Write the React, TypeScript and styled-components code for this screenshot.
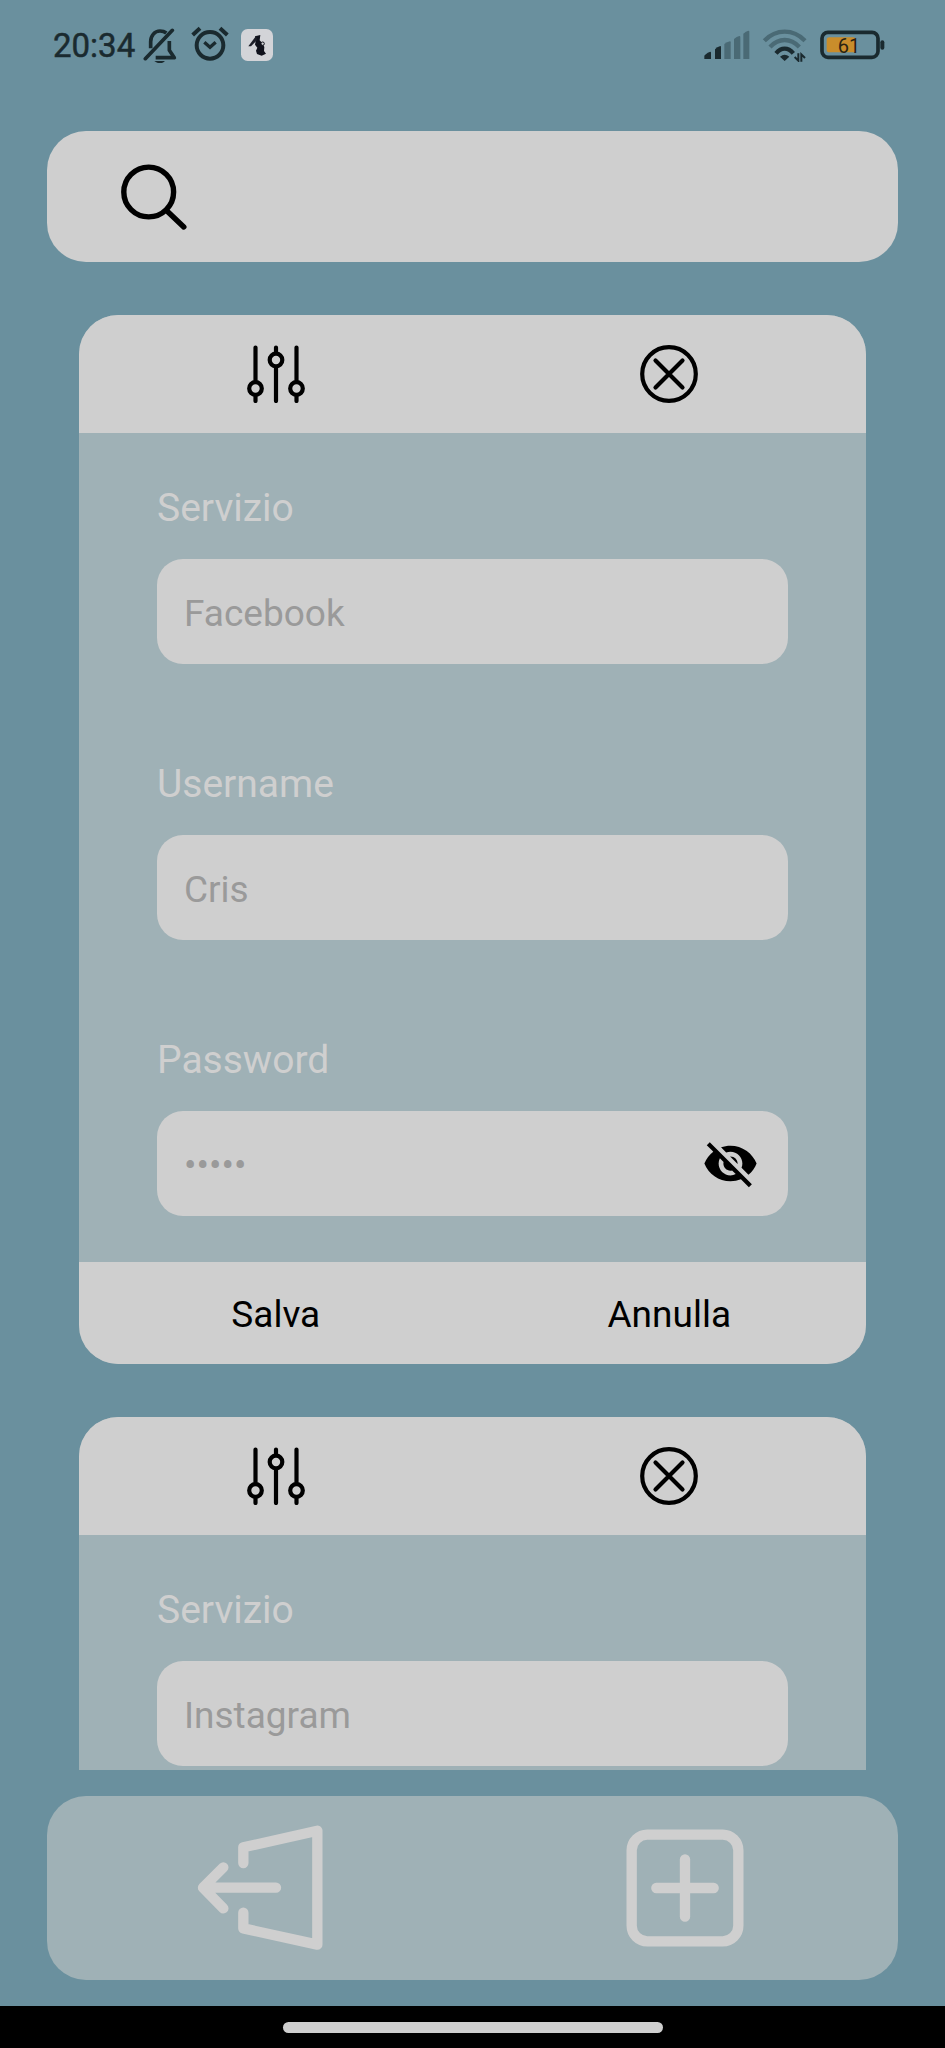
import React, { useId, useState } from "react";
import styled, { createGlobalStyle } from "styled-components";
import { MdVisibility, MdVisibilityOff } from "react-icons/md";

const color = {
  page: "#6a909e",
  light: "#cfcfcf",
  panel: "#9fb1b6",
  placeholder: "#9a9a9a",
  status: "#1a2a2f",
  statusFaded: "#4a6a75",
};

const GlobalStyle = createGlobalStyle`
  *, *::before, *::after { box-sizing: border-box; }
  body { margin: 0; background: ${color.page}; font-family: Roboto, "Liberation Sans", sans-serif; }
  button, input { font: inherit; }
`;

const Screen = styled.div`
  height: 100vh;
  display: flex;
  flex-direction: column;
  background: ${color.page};
`;

const StatusBar = styled.header`
  flex: none;
  height: 90px;
  padding: 0 60px 0 53px;
  display: flex;
  align-items: center;
  justify-content: space-between;
  color: ${color.status};
`;

const StatusGroup = styled.div<{ $gap: number }>`
  display: flex;
  align-items: center;
  gap: ${(p) => p.$gap}px;
`;

const Clock = styled.time`
  padding-top: 2px;
  font-size: 33px;
  line-height: 40px;
  -webkit-text-stroke: 0.5px currentColor;
`;

const SearchBox = styled.label`
  flex: none;
  height: 131px;
  margin: 41px 5% 0;
  padding: 0 39px 0 74px;
  display: flex;
  align-items: center;
  gap: 26px;
  border-radius: 39px;
  background: ${color.light};
`;

const SearchInput = styled.input`
  flex: 1;
  min-width: 0;
  height: 100%;
  border: 0;
  outline: 0;
  background: transparent;
  font-size: 37px;
`;

const CardList = styled.main`
  flex: 1;
  min-height: 0;
  margin-top: 53px;
  padding: 0 79px;
  overflow-y: auto;
  scrollbar-width: none;
  display: flex;
  flex-direction: column;
  gap: 53px;
`;

const Card = styled.form`
  flex: none;
  border-radius: 39px;
  overflow: hidden;
  background: ${color.panel};
`;

const CardBar = styled.div`
  height: 118px;
  display: grid;
  grid-template-columns: 1fr 1fr;
  background: ${color.light};
`;

const CardActions = styled(CardBar)`
  height: 102px;
  padding-top: 3px;
`;

const BarButton = styled.button`
  display: flex;
  align-items: center;
  justify-content: center;
  padding: 0;
  border: 0;
  background: transparent;
  color: #000;
  font-size: 37px;
  line-height: 44px;
  cursor: pointer;
`;

const Fields = styled.div`
  padding: 52px 78px 46px;
  display: flex;
  flex-direction: column;
  gap: 97px;
`;

const FieldGroup = styled.div`
  display: flex;
  flex-direction: column;
  gap: 27px;
`;

const Label = styled.label`
  font-size: 39px;
  line-height: 47px;
  color: ${color.light};
`;

const InputBox = styled.div`
  height: 105px;
  padding: 0 29px 0 27px;
  display: flex;
  align-items: center;
  border-radius: 26px;
  background: ${color.light};
`;

const TextInput = styled.input`
  flex: 1;
  min-width: 0;
  height: 100%;
  padding: 3px 0 0;
  border: 0;
  outline: 0;
  background: transparent;
  font-size: 37px;
  color: #000;
  &::placeholder { color: ${color.placeholder}; opacity: 1; }
`;

const EyeButton = styled.button`
  display: flex;
  padding: 0;
  border: 0;
  background: transparent;
  color: #000;
  cursor: pointer;
`;

const BottomNav = styled.nav`
  flex: none;
  height: 184px;
  margin: 26px 5%;
  display: grid;
  grid-template-columns: 1fr 1fr;
  border-radius: 39px;
  background: ${color.panel};
`;

const NavButton = styled(BarButton)`
  color: ${color.light};
`;

const GestureBar = styled.footer`
  flex: none;
  height: 42px;
  display: flex;
  align-items: center;
  justify-content: center;
  background: #000;
`;

const GestureHandle = styled.div`
  width: 380px;
  max-width: 50%;
  height: 11px;
  border-radius: 6px;
  background: ${color.light};
`;

const BellOffIcon = () => (
  <svg width="36" height="36" viewBox="0 0 108 108" fill="none" stroke="currentColor" strokeWidth="11" aria-hidden="true">
    <path d="M7 95 88 10" strokeLinecap="round" />
    <path d="M23 64V44C23 26 35 12 51 12c8 0 14 2 19 6" />
    <path d="M79 42v28l15 22H38" strokeLinejoin="round" />
    <path d="M34 102h32q-14 14-32 0z" fill="currentColor" stroke="none" />
  </svg>
);

const AlarmIcon = () => (
  <svg width="40" height="40" viewBox="0 0 120 120" fill="none" stroke="currentColor" strokeWidth="12" aria-hidden="true">
    <circle cx="60" cy="61" r="40" />
    <path d="M43 52l17 15 17-15" strokeWidth="10" />
    <path d="M8 30 30 10M90 10l22 20" />
  </svg>
);

const AppBadge = () => (
  <svg width="32" height="32" viewBox="0 0 96 96" aria-hidden="true">
    <rect width="96" height="96" rx="20" fill="#d3d4d8" />
    <path d="M42 22 58 18l-2 16 8 8 6 12-1 12 6 8-13 6-14-5-3-10 4-9-7-9 2-10z" fill="#10121c" />
    <path d="M46 20 22 52l8 0 18-18z" fill="#1c1e28" />
    <circle cx="65" cy="44" r="5" fill="#d3d4d8" stroke="#10121c" strokeWidth="3" />
  </svg>
);

const SignalIcon = () => (
  <svg width="46" height="30" viewBox="0 0 138 90" fill={color.statusFaded} aria-hidden="true">
    <path d="M2 76q10-10 17-11 2 0 2 3v19H1V78z" fill={color.status} />
    <path d="M33 58q6-8 16-10 2 0 2 3v36H33z" fill={color.status} />
    <path d="M61 42q8-6 17-8 2 0 2 3v50H61z" />
    <path d="M90 27q8-7 16-9 3 0 3 3v66H90z" />
    <path d="M118 11q8-7 15-9 3 0 3 3v82H118z" />
  </svg>
);

const WifiIcon = () => (
  <svg width="46" height="34" viewBox="0 0 138 102" fill="none" strokeWidth="13" aria-hidden="true">
    <path d="M7 38Q34 11 68 11t61 27" stroke={color.statusFaded} />
    <path d="M24 57Q44 36 68 36t44 21" stroke={color.statusFaded} />
    <path d="M42 76Q54 62 68 62t26 14" stroke={color.status} />
    <path d="M54 86q14-12 28 0L68 99z" fill={color.status} />
    <path d="M109 76v22L98 87M118 101V79l11 11" stroke={color.status} strokeWidth="6" />
  </svg>
);

const BatteryIcon = () => (
  <svg width="65" height="30" viewBox="0 0 195 90" role="img" aria-label="61%">
    <rect x="6" y="7" width="168" height="75" rx="18" fill="none" stroke={color.status} strokeWidth="11" />
    <rect x="181" y="31" width="12" height="28" rx="6" fill={color.status} />
    <rect x="20" y="22" width="87" height="45" rx="8" fill="#c98d2b" />
    <text x="87" y="68" fontSize="60" textAnchor="middle" fill="#2a2413">61</text>
  </svg>
);

const SearchIcon = () => (
  <svg width="66" height="66" viewBox="0 0 66 66" fill="none" stroke="#000" strokeWidth="5.4" aria-hidden="true">
    <circle cx="27.7" cy="28" r="24.9" />
    <path d="M46 47 62.8 63" strokeLinecap="round" />
  </svg>
);

const SlidersIcon = () => (
  <svg width="58" height="58" viewBox="0 0 58 58" fill="none" stroke="currentColor" strokeWidth="4.2" strokeLinecap="round" aria-hidden="true">
    <path d="M8.5 2.5v33M8.5 50v6M29 2.5V8M29 22v34M49.5 2.5v33M49.5 50v6" />
    <circle cx="8.5" cy="43.5" r="6.3" />
    <circle cx="29" cy="15" r="6.3" />
    <circle cx="49.5" cy="43.5" r="6.3" />
  </svg>
);

const CloseIcon = () => (
  <svg width="58" height="58" viewBox="0 0 58 58" fill="none" stroke="currentColor" strokeWidth="4.2" strokeLinecap="round" aria-hidden="true">
    <circle cx="29" cy="29" r="26.8" />
    <path d="M15.5 15.5l27 27M42.5 15.5l-27 27" />
  </svg>
);

const LogoutIcon = () => (
  <svg width="128" height="128" viewBox="0 0 384 384" fill="none" stroke="currentColor" strokeWidth="31" strokeLinecap="round" strokeLinejoin="round" aria-hidden="true">
    <path d="M142 117V70L364 20V362L142 313V266" />
    <path d="M240 191H21M82 130 21 191l61 62" />
  </svg>
);

const AddIcon = () => (
  <svg width="118" height="118" viewBox="0 0 354 354" fill="none" stroke="currentColor" strokeWidth="31" strokeLinecap="round" aria-hidden="true">
    <rect x="17" y="17" width="320" height="320" rx="47" />
    <path d="M91 177H263M177 91V263" />
  </svg>
);

type FieldProps = { label: string; placeholder: string; secret?: boolean };

function Field({ label, placeholder, secret = false }: FieldProps) {
  const id = useId();
  const [hidden, setHidden] = useState(true);
  return (
    <FieldGroup>
      <Label htmlFor={id}>{label}</Label>
      <InputBox>
        <TextInput id={id} type={secret && hidden ? "password" : "text"} placeholder={placeholder} />
        {secret && (
          <EyeButton type="button" aria-label="Mostra password" onClick={() => setHidden(!hidden)}>
            {hidden ? <MdVisibilityOff size={57} /> : <MdVisibility size={57} />}
          </EyeButton>
        )}
      </InputBox>
    </FieldGroup>
  );
}

function AccountCard({ service, username }: { service: string; username: string }) {
  return (
    <Card onSubmit={(e) => e.preventDefault()}>
      <CardBar>
        <BarButton type="button" aria-label="Modifica"><SlidersIcon /></BarButton>
        <BarButton type="button" aria-label="Elimina"><CloseIcon /></BarButton>
      </CardBar>
      <Fields>
        <Field label="Servizio" placeholder={service} />
        <Field label="Username" placeholder={username} />
        <Field label="Password" placeholder="•••••" secret />
      </Fields>
      <CardActions>
        <BarButton type="submit">Salva</BarButton>
        <BarButton type="reset">Annulla</BarButton>
      </CardActions>
    </Card>
  );
}

const accounts = [
  { service: "Facebook", username: "Cris" },
  { service: "Instagram", username: "Cris" },
];

export default function App() {
  return (
    <>
      <GlobalStyle />
      <Screen>
        <StatusBar>
          <StatusGroup $gap={11}>
            <StatusGroup $gap={8}>
              <Clock>20:34</Clock>
              <BellOffIcon />
            </StatusGroup>
            <AlarmIcon />
            <AppBadge />
          </StatusGroup>
          <StatusGroup $gap={12}>
            <SignalIcon />
            <WifiIcon />
            <BatteryIcon />
          </StatusGroup>
        </StatusBar>
        <SearchBox>
          <SearchIcon />
          <SearchInput type="search" aria-label="Cerca" />
        </SearchBox>
        <CardList>
          {accounts.map((a) => (
            <AccountCard key={a.service} {...a} />
          ))}
        </CardList>
        <BottomNav>
          <NavButton type="button" aria-label="Esci"><LogoutIcon /></NavButton>
          <NavButton type="button" aria-label="Aggiungi"><AddIcon /></NavButton>
        </BottomNav>
        <GestureBar><GestureHandle /></GestureBar>
      </Screen>
    </>
  );
}
